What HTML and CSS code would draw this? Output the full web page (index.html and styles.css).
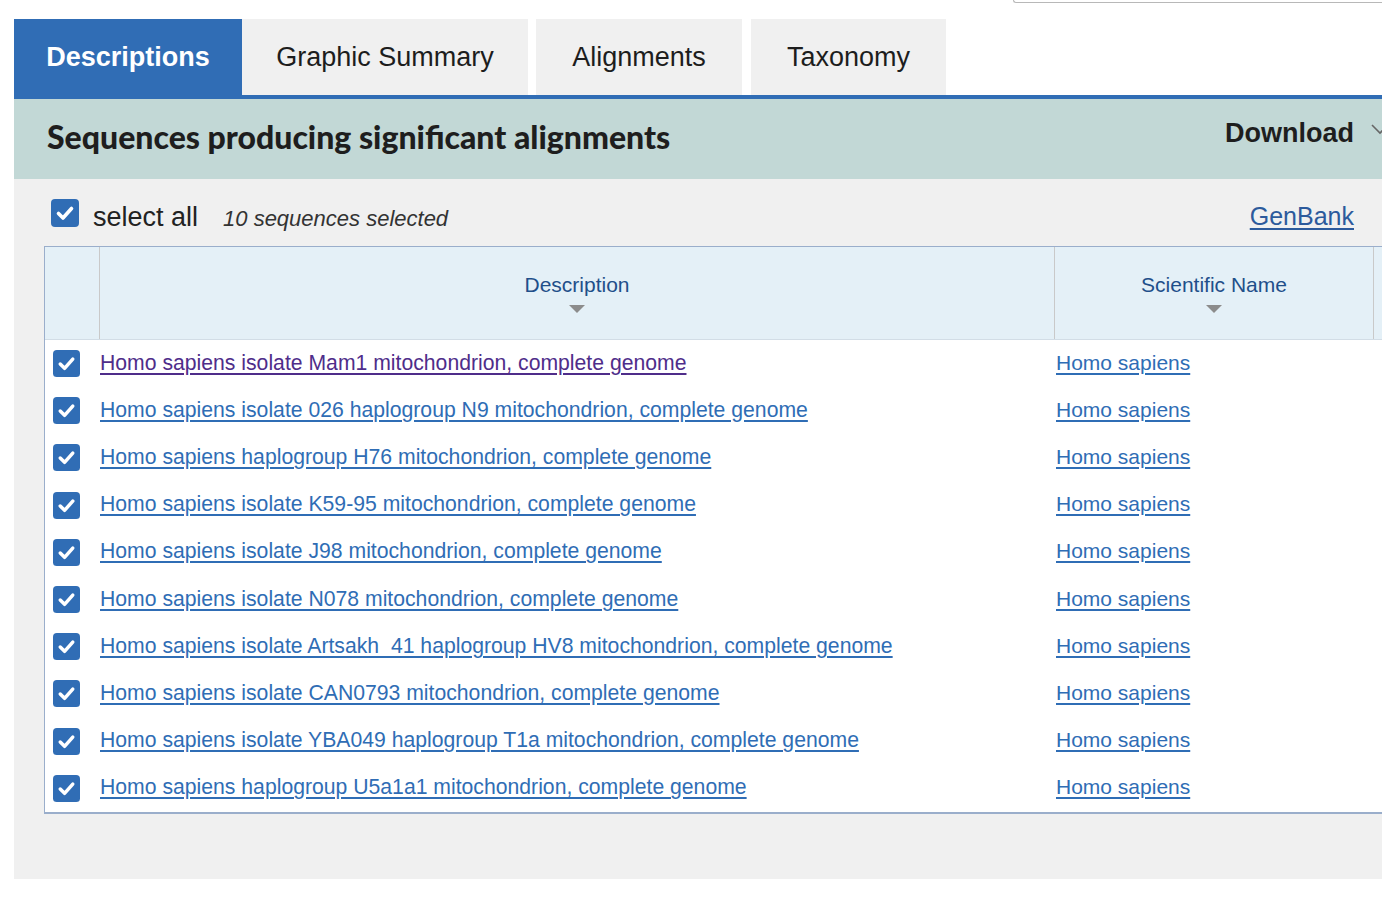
FILE: index.html
```html
<!DOCTYPE html>
<html>
<head>
<meta charset="utf-8">
<link rel="stylesheet" href="styles.css">
</head>
<body>
<div class="topstrip"><div class="searchbox"></div></div>
<div class="results">
  <div class="tabs">
    <div class="tab active">Descriptions</div>
    <div class="tab t-graphic">Graphic Summary</div>
    <div class="tab t-align">Alignments</div>
    <div class="tab t-tax">Taxonomy</div>
  </div>
  <div class="banner">
    <h2 class="banner-title">Sequences producing significant alignments</h2>
    <div class="download">Download
      <svg class="chev" width="20" height="14" viewBox="0 0 20 14"><path d="M2 3 L10 11 L18 3" fill="none" stroke="#666" stroke-width="1.6"/></svg>
    </div>
  </div>
  <div class="panel">
    <div class="selrow">
      <svg class="cb cb-big" viewBox="0 0 28 28"><rect x="0" y="0" width="28" height="28" rx="4" fill="#306db5"/><path d="M7.5 14.5 L12 19 L20.5 9.5" fill="none" stroke="#fff" stroke-width="3.6" stroke-linecap="round" stroke-linejoin="round"/></svg>
      <span class="selall">select all</span>
      <span class="selcount">10 sequences selected</span>
      <a class="genbank" href="#">GenBank</a>
    </div>
    <div class="tbl">
      <div class="hrow">
        <div class="hcell hc-check"></div>
        <div class="hcell hc-desc"><span>Description</span><i class="caret"></i></div>
        <div class="hcell hc-sci"><span>Scientific Name</span><i class="caret"></i></div>
        <div class="hcell hc-next"><i class="caret"></i></div>
      </div>
      <div class="row"><div class="c-check"><svg class="cb" viewBox="0 0 28 28"><rect width="28" height="28" rx="4" fill="#306db5"/><path d="M7.5 14.5 L12 19 L20.5 9.5" fill="none" stroke="#fff" stroke-width="3.6" stroke-linecap="round" stroke-linejoin="round"/></svg></div><div class="c-desc"><a class="visited" href="#">Homo sapiens isolate Mam1 mitochondrion, complete genome</a></div><div class="c-sci"><a href="#">Homo sapiens</a></div></div>
      <div class="row"><div class="c-check"><svg class="cb" viewBox="0 0 28 28"><rect width="28" height="28" rx="4" fill="#306db5"/><path d="M7.5 14.5 L12 19 L20.5 9.5" fill="none" stroke="#fff" stroke-width="3.6" stroke-linecap="round" stroke-linejoin="round"/></svg></div><div class="c-desc"><a href="#">Homo sapiens isolate 026 haplogroup N9 mitochondrion, complete genome</a></div><div class="c-sci"><a href="#">Homo sapiens</a></div></div>
      <div class="row"><div class="c-check"><svg class="cb" viewBox="0 0 28 28"><rect width="28" height="28" rx="4" fill="#306db5"/><path d="M7.5 14.5 L12 19 L20.5 9.5" fill="none" stroke="#fff" stroke-width="3.6" stroke-linecap="round" stroke-linejoin="round"/></svg></div><div class="c-desc"><a href="#">Homo sapiens haplogroup H76 mitochondrion, complete genome</a></div><div class="c-sci"><a href="#">Homo sapiens</a></div></div>
      <div class="row"><div class="c-check"><svg class="cb" viewBox="0 0 28 28"><rect width="28" height="28" rx="4" fill="#306db5"/><path d="M7.5 14.5 L12 19 L20.5 9.5" fill="none" stroke="#fff" stroke-width="3.6" stroke-linecap="round" stroke-linejoin="round"/></svg></div><div class="c-desc"><a href="#">Homo sapiens isolate K59-95 mitochondrion, complete genome</a></div><div class="c-sci"><a href="#">Homo sapiens</a></div></div>
      <div class="row"><div class="c-check"><svg class="cb" viewBox="0 0 28 28"><rect width="28" height="28" rx="4" fill="#306db5"/><path d="M7.5 14.5 L12 19 L20.5 9.5" fill="none" stroke="#fff" stroke-width="3.6" stroke-linecap="round" stroke-linejoin="round"/></svg></div><div class="c-desc"><a href="#">Homo sapiens isolate J98 mitochondrion, complete genome</a></div><div class="c-sci"><a href="#">Homo sapiens</a></div></div>
      <div class="row"><div class="c-check"><svg class="cb" viewBox="0 0 28 28"><rect width="28" height="28" rx="4" fill="#306db5"/><path d="M7.5 14.5 L12 19 L20.5 9.5" fill="none" stroke="#fff" stroke-width="3.6" stroke-linecap="round" stroke-linejoin="round"/></svg></div><div class="c-desc"><a href="#">Homo sapiens isolate N078 mitochondrion, complete genome</a></div><div class="c-sci"><a href="#">Homo sapiens</a></div></div>
      <div class="row"><div class="c-check"><svg class="cb" viewBox="0 0 28 28"><rect width="28" height="28" rx="4" fill="#306db5"/><path d="M7.5 14.5 L12 19 L20.5 9.5" fill="none" stroke="#fff" stroke-width="3.6" stroke-linecap="round" stroke-linejoin="round"/></svg></div><div class="c-desc"><a href="#">Homo sapiens isolate Artsakh_41 haplogroup HV8 mitochondrion, complete genome</a></div><div class="c-sci"><a href="#">Homo sapiens</a></div></div>
      <div class="row"><div class="c-check"><svg class="cb" viewBox="0 0 28 28"><rect width="28" height="28" rx="4" fill="#306db5"/><path d="M7.5 14.5 L12 19 L20.5 9.5" fill="none" stroke="#fff" stroke-width="3.6" stroke-linecap="round" stroke-linejoin="round"/></svg></div><div class="c-desc"><a href="#">Homo sapiens isolate CAN0793 mitochondrion, complete genome</a></div><div class="c-sci"><a href="#">Homo sapiens</a></div></div>
      <div class="row"><div class="c-check"><svg class="cb" viewBox="0 0 28 28"><rect width="28" height="28" rx="4" fill="#306db5"/><path d="M7.5 14.5 L12 19 L20.5 9.5" fill="none" stroke="#fff" stroke-width="3.6" stroke-linecap="round" stroke-linejoin="round"/></svg></div><div class="c-desc"><a href="#">Homo sapiens isolate YBA049 haplogroup T1a mitochondrion, complete genome</a></div><div class="c-sci"><a href="#">Homo sapiens</a></div></div>
      <div class="row"><div class="c-check"><svg class="cb" viewBox="0 0 28 28"><rect width="28" height="28" rx="4" fill="#306db5"/><path d="M7.5 14.5 L12 19 L20.5 9.5" fill="none" stroke="#fff" stroke-width="3.6" stroke-linecap="round" stroke-linejoin="round"/></svg></div><div class="c-desc"><a href="#">Homo sapiens haplogroup U5a1a1 mitochondrion, complete genome</a></div><div class="c-sci"><a href="#">Homo sapiens</a></div></div>
    </div>
  </div>
</div>
</body>
</html>
```

FILE: styles.css
```css
html, body {
  margin: 0;
  padding: 0;
  background: #fff;
  overflow: hidden;
  width: 1382px;
  height: 922px;
}
body {
  font-family: "Liberation Sans", Arial, sans-serif;
  color: #222;
}
.topstrip {
  height: 19px;
}
.searchbox {
  margin-left: 1013px;
  width: 420px;
  height: 2px;
  border-left: 1px solid #b8b8b8;
  border-bottom: 1px solid #b8b8b8;
  border-bottom-left-radius: 5px;
}
.results {
  margin-left: 14px;
  width: 1500px;
}
.tabs {
  display: flex;
  height: 76px;
  border-bottom: 4px solid #306db5;
}
.tab {
  display: flex;
  align-items: center;
  justify-content: center;
  background: #f0f0f0;
  font-size: 27px;
  color: #1d1d1d;
}
.tab.active {
  width: 228px;
  background: #306db5;
  color: #fff;
  font-weight: bold;
}
.t-graphic { width: 286px; }
.t-align { width: 206px; margin-left: 8px; }
.t-tax { width: 195px; margin-left: 9px; }
.banner {
  height: 80px;
  background: #c2d8d6;
  display: flex;
  align-items: center;
  padding-left: 33px;
}
.banner-title {
  margin: 0 0 6px 0;
  font-family: "Lato", "Open Sans", sans-serif;
  font-weight: 900;
  font-size: 32px;
  color: #1e1e1e;
  flex: 0 0 auto;
  width: 1178px;
}
.download {
  font-size: 27px;
  font-weight: bold;
  color: #1e1e1e;
  margin-top: -12px;
  display: flex;
  align-items: center;
}
.chev {
  margin-left: 16px;
  margin-top: -8px;
}
.panel {
  background: #f0f0f0;
  padding: 20px 0 65px 30px;
}
.selrow {
  display: flex;
  align-items: center;
  height: 28px;
  padding-left: 7px;
  width: 1303px;
  margin-bottom: 19px;
}
.cb {
  width: 27px;
  height: 27px;
  display: block;
}
.cb-big {
  width: 28px;
  height: 28px;
}
.selall {
  font-size: 27px;
  margin-left: 14px;
  margin-top: 9px;
  color: #222;
}
.selcount {
  font-size: 22px;
  font-style: italic;
  margin-left: 25px;
  margin-top: 12px;
  color: #333;
}
.genbank {
  margin-left: auto;
  font-size: 25px;
  color: #2c5a9c;
  margin-top: 7px;
}
.tbl {
  border: 1px solid #9aaecb;
  border-bottom-width: 2px;
  border-right: none;
  background: #fff;
}
.hrow {
  display: grid;
  grid-template-columns: 55px 955px 319px 300px;
  height: 92px;
  background: #e4f0f7;
  border-bottom: 1px solid #d2dde6;
}
.hcell {
  border-right: 1px solid #c9c9c9;
  display: flex;
  flex-direction: column;
  align-items: center;
  justify-content: center;
  gap: 8px;
  font-size: 21px;
  color: #1f4f8a;
}
.hcell span {
  line-height: 24px;
}
.hc-check i { display: none; }
.hc-next {
  align-items: flex-start;
  padding-left: 8px;
  padding-top: 30px;
}
.caret {
  width: 0;
  height: 0;
  border-left: 8px solid transparent;
  border-right: 8px solid transparent;
  border-top: 8px solid #8c8c8c;
}
.row {
  display: grid;
  grid-template-columns: 55px 955px 319px;
  height: 47.2px;
  align-items: center;
}
.row > div {
  margin-top: -2px;
}
.c-check {
  padding-left: 8px;
}
.row > .c-check {
  margin-top: 0;
}
.c-desc {
  font-size: 21.2px;
}
.c-sci {
  font-size: 21px;
  padding-left: 1px;
}
a {
  color: #2f6db5;
  text-decoration: underline;
  text-underline-offset: 3px;
}
a.visited {
  color: #4f2d8a;
}
```
